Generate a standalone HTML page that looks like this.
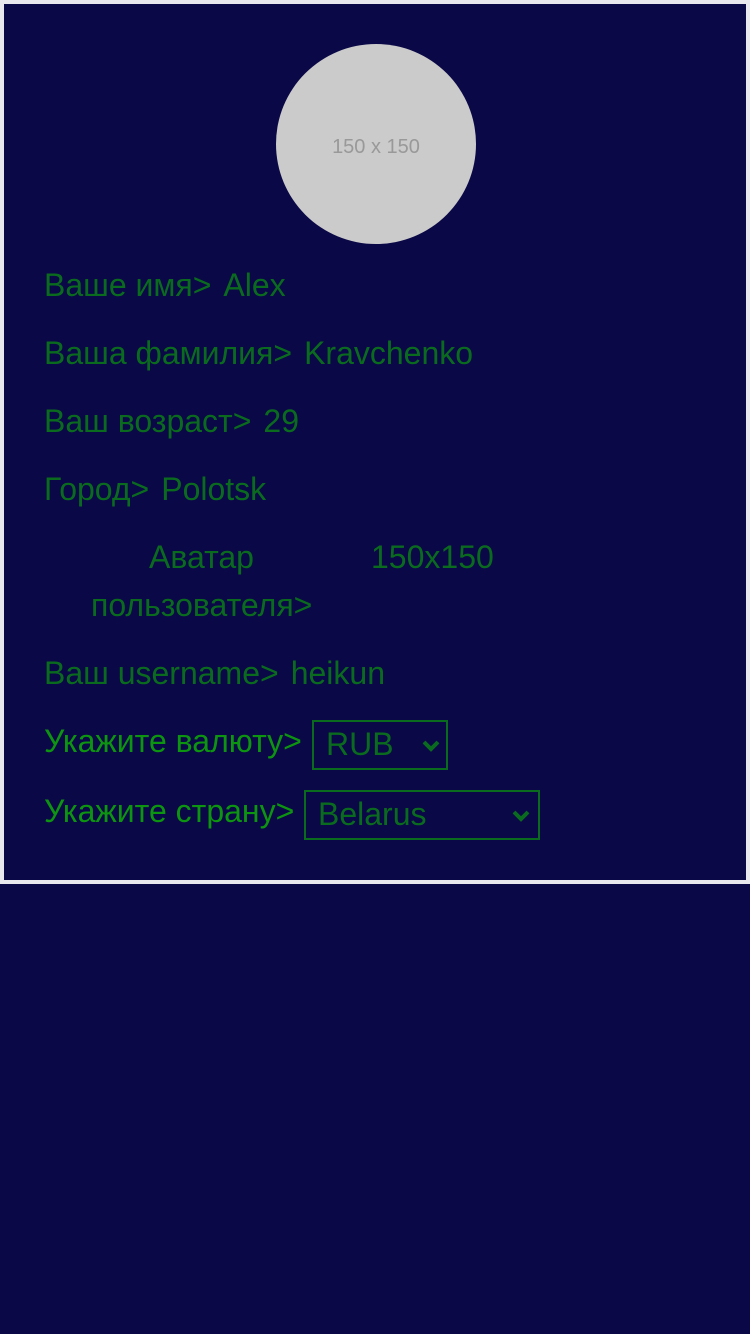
<!DOCTYPE html>
<html><head><meta charset="utf-8"><style>
html,body{margin:0;padding:0;background:#0a0846;width:750px;height:1334px;overflow:hidden}
body{font-family:"Liberation Sans",sans-serif;font-size:32px;color:#0a6b1f;position:relative}
.box{position:absolute;left:0;top:0;width:742px;height:876px;border:4px solid #e8e8ee;background:#0a0846}
.av{position:absolute;left:276px;top:44px;width:200px;height:200px;border-radius:50%;background:#cbcbcb;color:#999;font-size:20px;text-align:center;line-height:206px}
.t{position:absolute;white-space:nowrap;line-height:34px}
.t i{font-style:normal;margin-left:12px}
.b{color:#0d9410}
.sel{position:absolute;border:2px solid #0a6b1f;box-sizing:border-box;height:50px;line-height:44px;padding-left:12px;color:#0a6b1f;font-size:32px}
.sel svg{position:absolute;top:18px}
</style></head><body>
<div class="box"></div>
<div class="av">150 x 150</div>
<div class="t" style="left:44px;top:268px">Ваше имя&gt;<i>Alex</i></div>
<div class="t" style="left:44px;top:336px">Ваша фамилия&gt;<i>Kravchenko</i></div>
<div class="t" style="left:44px;top:404px">Ваш возраст&gt;<i>29</i></div>
<div class="t" style="left:44px;top:472px">Город&gt;<i>Polotsk</i></div>
<div class="t" style="left:149px;top:540px">Аватар</div>
<div class="t" style="left:91px;top:588px">пользователя&gt;</div>
<div class="t" style="left:371px;top:540px">150x150</div>
<div class="t" style="left:44px;top:656px">Ваш username&gt;<i>heikun</i></div>
<div class="t b" style="left:44px;top:724px">Укажите валюту&gt;</div>
<div class="sel" style="left:312px;top:720px;width:136px">RUB<svg style="left:108px" width="18" height="12" viewBox="0 0 18 12"><path d="M2 2 L9 9 L16 2" stroke="#0a6b1f" stroke-width="4" fill="none"/></svg></div>
<div class="t b" style="left:44px;top:794px">Укажите страну&gt;</div>
<div class="sel" style="left:304px;top:790px;width:236px">Belarus<svg style="left:206px" width="18" height="12" viewBox="0 0 18 12"><path d="M2 2 L9 9 L16 2" stroke="#0a6b1f" stroke-width="4" fill="none"/></svg></div>
</body></html>
